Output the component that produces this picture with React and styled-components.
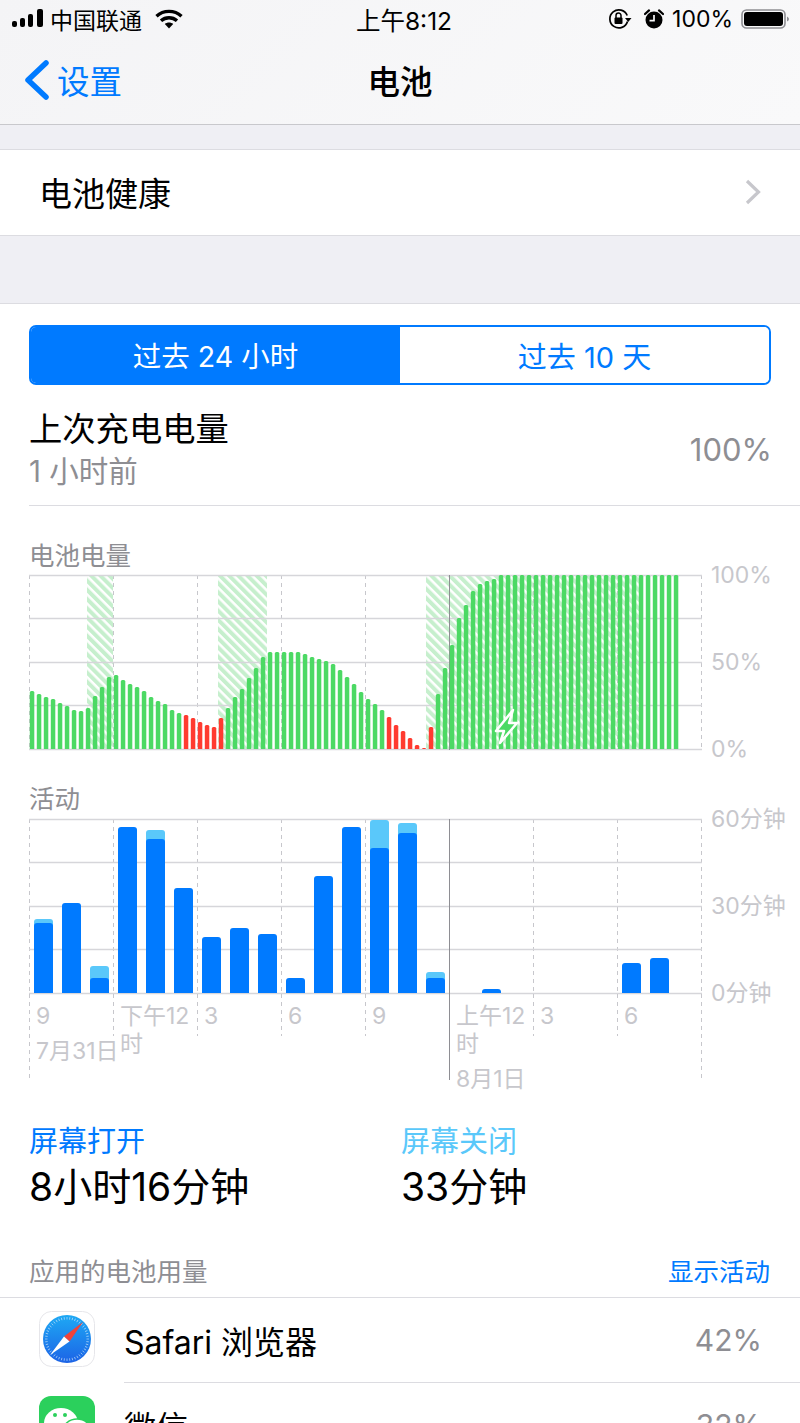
import React from "react";
import styled, { createGlobalStyle } from "styled-components";

const GlobalStyle = createGlobalStyle`
  * { box-sizing: border-box; }
  html, body {
    margin: 0;
    height: 1423px;
    overflow: hidden;
    background: #efeff4;
    font-family: Inter, "Noto Sans CJK SC", sans-serif;
    color: #000;
  }
`;

const Page = styled.div`
  width: 800px;
  height: 1423px;
  overflow: hidden;
`;

const TopBar = styled.header`
  background: linear-gradient(135deg, #f4f4f6, #f9f9fa);
  border-bottom: 1px solid #c8c8cc;
  height: 125px;
`;

const StatusBar = styled.div`
  display: grid;
  grid-template-columns: 1fr auto 1fr;
  align-items: center;
  height: 40px;
  padding: 0 10px 2px 12px;
  font-size: 23px;
`;

const StatusSide = styled.div`
  display: flex;
  align-items: center;
  justify-content: ${(p) => (p.$end ? "flex-end" : "flex-start")};
  gap: ${(p) => p.$gap}px;
`;

const StatusTime = styled.span`
  margin-left: 6px;
  font-size: 24.5px;
`;

const WifiSvg = styled.svg`
  margin-left: 7px;
`;

const LockSvg = styled.svg`
  margin-right: 4px;
`;

const Nav = styled.nav`
  display: grid;
  grid-template-columns: 1fr auto 1fr;
  align-items: center;
  height: 84px;
  padding-bottom: 5px;
`;

const Back = styled.div`
  display: flex;
  align-items: center;
  gap: 8px;
  padding-left: 25px;
  color: #007aff;
  font-size: 32.5px;
`;

const NavTitle = styled.div`
  font-size: 32.5px;
  font-weight: 500;
`;

const HealthRow = styled.div`
  display: flex;
  align-items: center;
  justify-content: space-between;
  height: 87px;
  margin-top: 24px;
  padding: 0 38px 2px 39px;
  background: #fff;
  border-top: 1px solid #dcdce1;
  border-bottom: 1px solid #dcdce1;
  font-size: 33px;
`;

const Card = styled.section`
  margin-top: 67px;
  padding-top: 21px;
  background: #fff;
  border-top: 1px solid #dcdce1;
`;

const Segmented = styled.div`
  display: grid;
  grid-template-columns: 1fr 1fr;
  height: 60px;
  margin: 0 29px;
  border: 2px solid #007aff;
  border-radius: 7px;
  overflow: hidden;
`;

const Segment = styled.div`
  display: flex;
  align-items: center;
  justify-content: center;
  padding-bottom: 1px;
  font-size: ${(p) => (p.$active ? 28.5 : 29)}px;
  background: ${(p) => (p.$active ? "#007aff" : "#fff")};
  color: ${(p) => (p.$active ? "#fff" : "#007aff")};
`;

const Summary = styled.div`
  display: flex;
  justify-content: space-between;
  align-items: center;
  height: 121px;
  margin-left: 29px;
  padding: 8px 28px 0 0;
  border-bottom: 1px solid #dcdce1;
`;

const SummaryTitle = styled.div`
  font-size: 33.3px;
  line-height: 40px;
`;

const SummarySub = styled.div`
  margin-top: 4px;
  font-size: 29.5px;
  line-height: 36px;
  color: #8e8e93;
`;

const SummaryValue = styled.div`
  font-size: 31px;
  color: #8e8e93;
`;

const ChartLabel = styled.div`
  margin: ${(p) => p.$top}px 0 0 29px;
  font-size: 25.5px;
  line-height: 36px;
  color: #8e8e93;
`;

const ChartRow = styled.div`
  display: flex;
  margin: ${(p) => p.$top || 0}px 0 0 29px;
`;

const ChartSvg = styled.svg`
  display: block;
  flex: none;
  overflow: visible;
`;

const YAxis = styled.div`
  display: flex;
  flex-direction: column;
  justify-content: space-between;
  height: 200px;
  margin: -12px 0 -12px 9px;
`;

const YLabel = styled.div`
  font-size: 23px;
  line-height: 26px;
  color: #c7c7cc;
  white-space: nowrap;
`;

const XAxis = styled.div`
  display: grid;
  grid-template-columns: repeat(8, 84px);
  height: 128px;
  margin-left: 29px;
`;

const XCol = styled.div`
  position: relative;
  padding: 8px 0 0 7px;
  font-size: 23px;
  line-height: 28px;
  color: #c7c7cc;
`;

/* the chart's vertical guides run on under the axis labels */
const XGuide = styled.i`
  position: absolute;
  top: 0;
  left: ${(p) => (p.$right ? "84px" : "0")};
  width: 1px;
  height: ${(p) => p.$h}px;
  background: ${(p) =>
    p.$solid
      ? "#8e8e93"
      : "repeating-linear-gradient(to bottom, #c7c7cc 0 4px, transparent 4px 8px)"};
`;

const XDate = styled.div`
  margin-top: 7px;
  white-space: nowrap;
`;

const Usage = styled.div`
  display: grid;
  grid-template-columns: 372px 1fr;
  padding-left: 29px;
`;

const UsageLabel = styled.div`
  font-size: 29px;
  line-height: 40px;
  color: ${(p) => p.$color};
`;

const UsageValue = styled.div`
  font-size: 39px;
  line-height: 49px;
`;

const ListHeader = styled.div`
  display: flex;
  justify-content: space-between;
  align-items: flex-end;
  height: 87px;
  padding: 0 30px 7px 29px;
  border-bottom: 1px solid #dcdce1;
  font-size: 25.5px;
  line-height: 36px;
  color: #8e8e93;
`;

const ShowActivity = styled.span`
  color: #007aff;
`;

const AppRow = styled.div`
  display: grid;
  grid-template-columns: 56px 1fr;
  column-gap: 29px;
  height: 85px;
  padding-left: 39px;
`;

const AppIcon = styled.svg`
  display: block;
  margin-top: 13px;
`;

const AppBody = styled.div`
  display: flex;
  align-items: center;
  justify-content: space-between;
  padding-right: 38px;
  border-bottom: 1px solid #dcdce1;
  font-size: 32px;
`;

const AppPct = styled.span`
  font-size: 30px;
  color: #8e8e93;
`;

const GRID = "#d6d6da";
const GREEN = "#4cd964";
const RED = "#ff3b30";
const BLUE = "#007aff";
const LIGHT = "#5ac8fa";

const rise = [41, 52, 60, 71, 81, 92, 97, 97, 97, 97, 97, 95, 92, 90, 88, 85, 79, 72, 65, 57, 50, 45, 39];
const reds2 = [32, 24, 18, 11, 4, 1, 22];
const charge = [55, 81, 104, 131, 144, 158, 165, 168, 170];
const battery = [
  ...[58, 55, 52, 50, 46, 43, 39, 38, 41, 53, 62, 72, 74, 69, 65, 62, 58, 52, 48, 45, 39, 36].map((h) => [h, GREEN]),
  ...[34, 31, 27, 24, 22, 31].map((h) => [h, RED]),
  ...rise.map((h) => [h, GREEN]),
  ...reds2.map((h) => [h, RED]),
  ...charge.map((h) => [h, GREEN]),
  ...Array.from({ length: 26 }, () => [174, GREEN]),
];

// [x, top of dark bar, top of light bar]
const activity = [
  [34, 923, 919], [62, 903], [90, 978, 966], [118, 827], [146, 839, 830],
  [174, 888], [202, 937], [230, 928], [258, 934], [286, 978], [314, 876],
  [342, 827], [370, 848, 820], [398, 833, 823], [426, 978, 972],
  [482, 989], [622, 963], [650, 958],
];

const roundedTop = (x, top, w, bottom, r) =>
  `M${x} ${bottom}V${top + r}Q${x} ${top} ${x + r} ${top}H${x + w - r}Q${x + w} ${top} ${x + w} ${top + r}V${bottom}Z`;

const Grid = ({ top, guides }) => (
  <g>
    {guides.map((x) => (
      <line key={x} x1={x + 0.5} x2={x + 0.5} y1={top} y2={top + 174} stroke="#c7c7cc" strokeWidth="1" strokeDasharray="4 4" />
    ))}
    {[0, 43, 87, 130, 174].map((d) => (
      <line key={d} x1="29" x2="702" y1={top + d + 0.5} y2={top + d + 0.5} stroke={GRID} strokeWidth="1.5" />
    ))}
    <line x1="449.5" x2="449.5" y1={top} y2={top + 175} stroke="#8e8e93" strokeWidth="1" />
  </g>
);

const BatteryChart = () => (
  <ChartSvg width="673" height="176" viewBox="29 574 673 176">
    <defs>
      <pattern id="hatch" width="6.5" height="6.5" patternUnits="userSpaceOnUse" patternTransform="rotate(-45)">
        <rect width="4" height="6.5" fill="#c6efcd" />
      </pattern>
    </defs>
    <rect x="87" y="575" width="26" height="174" fill="url(#hatch)" />
    <rect x="218" y="575" width="49" height="174" fill="url(#hatch)" />
    <rect x="426" y="575" width="214" height="174" fill="url(#hatch)" />
    <Grid top={575} guides={[29, 113, 197, 281, 365, 533, 617, 701]} />
    {battery.map(([h, color], i) => (
      <path key={i} d={roundedTop(29.8 + i * 7, 749 - h, 4.5, 749, 1.5)} fill={color} />
    ))}
    <path d="M513 710L496 731H504L500 743L517 723H509Z" fill={GREEN} stroke="#fff" strokeWidth="2.5" strokeLinejoin="round" />
  </ChartSvg>
);

const ActivityChart = () => (
  <ChartSvg width="673" height="176" viewBox="29 818 673 176">
    <Grid top={819} guides={[29, 113, 197, 281, 365, 533, 617, 701]} />
    {activity.map(([x, top, light]) => (
      <g key={x}>
        {light && <path d={roundedTop(x, light, 19, top + 4, 3)} fill={LIGHT} />}
        <path d={roundedTop(x, top, 19, 993, 3)} fill={BLUE} />
      </g>
    ))}
  </ChartSvg>
);

const SignalIcon = () => (
  <svg width="32" height="20" viewBox="0 0 32 20">
    <rect x="0" y="12" width="5" height="6" rx="2" />
    <rect x="8" y="9" width="5" height="9" rx="2" />
    <rect x="16" y="5" width="5" height="13" rx="2" />
    <rect x="25" y="0" width="6" height="18" rx="2" />
  </svg>
);

const WifiIcon = () => (
  <WifiSvg width="28" height="20" viewBox="0 0 28 20" fill="none" stroke="#000" strokeWidth="3.4">
    <path d="M1.5 7.2C8.5 .8 19.5 .8 26.5 7.2" />
    <path d="M6 11.8C10.5 7.8 17.5 7.8 22 11.8" />
    <path d="M14 19.5L9.8 15C12 13 16 13 18.2 15Z" fill="#000" stroke="none" />
  </WifiSvg>
);

const RotationLockIcon = () => (
  <LockSvg width="24" height="22" viewBox="0 0 24 22" fill="none" stroke="#000">
    <path d="M19.5 13.5A9 9 0 1 1 19.2 7.5" strokeWidth="1.7" />
    <path d="M17 10L23.5 10L20.2 14Z" fill="#000" stroke="none" />
    <rect x="6.5" y="9.5" width="8" height="6.5" rx="1" fill="#000" stroke="none" />
    <path d="M8 10V7.5A2.5 2.5 0 0 1 13 7.5V10" strokeWidth="1.5" />
  </LockSvg>
);

const AlarmIcon = () => (
  <svg width="20" height="20" viewBox="0 0 20 20">
    <circle cx="10" cy="11" r="8.5" />
    <path d="M1 5L5 1.4M19 5L15 1.4" stroke="#000" strokeWidth="2.2" strokeLinecap="round" />
    <path d="M10 6V11.6H5.5" fill="none" stroke="#f8f8f9" strokeWidth="1.7" />
  </svg>
);

const BatteryIcon = () => (
  <svg width="49" height="20" viewBox="0 0 49 20">
    <rect x="1" y="1" width="43" height="18" rx="4.5" fill="none" stroke="#8e8e93" strokeWidth="1.6" />
    <rect x="3" y="3" width="39" height="14" rx="3" />
    <path d="M46 7.5Q48 8.5 48 10Q48 11.5 46 12.5Z" fill="#8e8e93" />
  </svg>
);

const SafariIcon = () => (
  <AppIcon width="56" height="56" viewBox="0 0 56 56">
    <defs>
      <linearGradient id="safariBlue" x1="0" y1="0" x2="0" y2="1">
        <stop offset="0" stopColor="#1ea9f4" />
        <stop offset="1" stopColor="#1c63e6" />
      </linearGradient>
    </defs>
    <rect x="0.5" y="0.5" width="55" height="55" rx="12" fill="#fff" stroke="#e6e6ea" />
    <circle cx="28" cy="28" r="24" fill="url(#safariBlue)" />
    {Array.from({ length: 48 }, (_, i) => (
      <line key={i} x1="28" y1="6" x2="28" y2="8.5" stroke="#cfe8fb" strokeWidth="0.6" transform={`rotate(${i * 7.5} 28 28)`} />
    ))}
    <path d="M44 11L25 25.5L30.5 30.5Z" fill="#f0433a" />
    <path d="M11 44L25 25.5L30.5 30.5Z" fill="#fff" />
  </AppIcon>
);

const WechatIcon = () => (
  <AppIcon width="56" height="56" viewBox="0 0 56 56">
    <rect width="56" height="56" rx="12" fill="#2bd05c" />
    <ellipse cx="22" cy="27" rx="17" ry="15" fill="#fff" />
    <circle cx="16" cy="19" r="2" fill="#2bd05c" />
    <circle cx="26" cy="19" r="2" fill="#2bd05c" />
    <ellipse cx="38" cy="35" rx="14" ry="12" fill="#fff" stroke="#2bd05c" strokeWidth="1.5" />
  </AppIcon>
);

export default function App() {
  return (
    <Page>
      <GlobalStyle />
      <TopBar>
        <StatusBar>
          <StatusSide $gap={6}>
            <SignalIcon />
            <span>中国联通</span>
            <WifiIcon />
          </StatusSide>
          <StatusTime>上午8:12</StatusTime>
          <StatusSide $end $gap={8}>
            <RotationLockIcon />
            <AlarmIcon />
            <span>100%</span>
            <BatteryIcon />
          </StatusSide>
        </StatusBar>
        <Nav>
          <Back>
            <svg width="24" height="40" viewBox="0 0 24 40" fill="none" stroke="#007aff" strokeWidth="5.5" strokeLinecap="round" strokeLinejoin="round">
              <path d="M21 3L3 20L21 37" />
            </svg>
            设置
          </Back>
          <NavTitle>电池</NavTitle>
        </Nav>
      </TopBar>

      <HealthRow>
        电池健康
        <svg width="18" height="26" viewBox="0 0 18 26" fill="none" stroke="#c7c7cc" strokeWidth="3.2">
          <path d="M3 2L14.5 13L3 24" />
        </svg>
      </HealthRow>

      <Card>
        <Segmented>
          <Segment $active>过去 24 小时</Segment>
          <Segment>过去 10 天</Segment>
        </Segmented>

        <Summary>
          <div>
            <SummaryTitle>上次充电电量</SummaryTitle>
            <SummarySub>1 小时前</SummarySub>
          </div>
          <SummaryValue>100%</SummaryValue>
        </Summary>

        <ChartLabel $top={32}>电池电量</ChartLabel>
        <ChartRow>
          <BatteryChart />
          <YAxis>
            <YLabel>100%</YLabel>
            <YLabel>50%</YLabel>
            <YLabel>0%</YLabel>
          </YAxis>
        </ChartRow>

        <ChartLabel $top={31}>活动</ChartLabel>
        <ChartRow $top={1}>
          <ActivityChart />
          <YAxis>
            <YLabel>60分钟</YLabel>
            <YLabel>30分钟</YLabel>
            <YLabel>0分钟</YLabel>
          </YAxis>
        </ChartRow>
        <XAxis>
          <XCol>
            <XGuide $h={84} />
            9<XDate>7月31日</XDate>
          </XCol>
          <XCol>
            <XGuide $h={42} />
            下午12时
          </XCol>
          <XCol>
            <XGuide $h={42} />3
          </XCol>
          <XCol>
            <XGuide $h={42} />6
          </XCol>
          <XCol>
            <XGuide $h={42} />9
          </XCol>
          <XCol>
            <XGuide $h={86} $solid />
            上午12时<XDate>8月1日</XDate>
          </XCol>
          <XCol>
            <XGuide $h={42} />3
          </XCol>
          <XCol>
            <XGuide $h={42} />6
            <XGuide $h={84} $right />
          </XCol>
        </XAxis>

        <Usage>
          <div>
            <UsageLabel $color="#007aff">屏幕打开</UsageLabel>
            <UsageValue>8小时16分钟</UsageValue>
          </div>
          <div>
            <UsageLabel $color="#5ac8fa">屏幕关闭</UsageLabel>
            <UsageValue>33分钟</UsageValue>
          </div>
        </Usage>

        <ListHeader>
          应用的电池用量
          <ShowActivity>显示活动</ShowActivity>
        </ListHeader>

        <AppRow>
          <SafariIcon />
          <AppBody>
            Safari 浏览器
            <AppPct>42%</AppPct>
          </AppBody>
        </AppRow>
        <AppRow>
          <WechatIcon />
          <AppBody>
            微信
            <AppPct>32%</AppPct>
          </AppBody>
        </AppRow>
      </Card>
    </Page>
  );
}
